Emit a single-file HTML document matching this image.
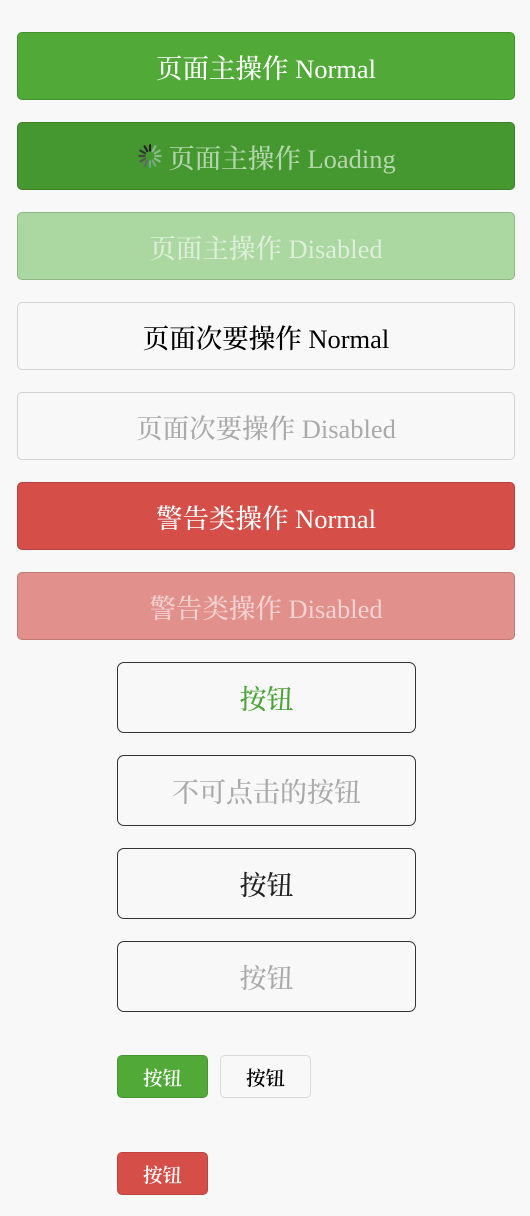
<!DOCTYPE html>
<html><head><meta charset="utf-8"><style>
body{margin:0;background:#f8f8f8;width:530px;height:1216px;position:relative;font-family:"Liberation Serif","Noto Serif CJK SC",serif;}
.b{position:absolute;left:17px;width:498px;height:68px;box-sizing:border-box;border-radius:5px;border:1px solid rgba(0,0,0,.15);display:flex;align-items:center;justify-content:center;font-size:26.5px;color:#fff;font-weight:500;}
.o{position:absolute;left:117px;width:299px;height:71px;box-sizing:border-box;border:1.5px solid #333;border-radius:7px;display:flex;align-items:center;justify-content:center;font-size:27px;font-weight:500;}
.m{position:absolute;width:91px;height:43px;box-sizing:border-box;border-radius:5px;border:1px solid rgba(0,0,0,.12);display:flex;align-items:center;justify-content:center;font-size:19.5px;color:#fff;font-weight:600;}
</style></head><body>
<div class="b" style="top:32px;background:#51aa38">页面主操作 Normal</div>
<div class="b" style="top:122px;background:#459830;color:rgba(255,255,255,.6)"><svg width="28" height="28" viewBox="0 0 26 26" style="margin-right:4px"><g stroke-width="2" stroke-linecap="round"><line x1="13" y1="3" x2="13" y2="8" stroke="#222"/><line x1="8" y1="4" x2="10.5" y2="8.5" stroke="#222"/><line x1="4" y1="8" x2="8.5" y2="10.5" stroke="#333"/><line x1="3" y1="13" x2="8" y2="13" stroke="#444"/><line x1="4" y1="18" x2="8.5" y2="15.5" stroke="#555"/><line x1="8" y1="22" x2="10.5" y2="17.5" stroke="#666"/><line x1="13" y1="23" x2="13" y2="18" stroke="#6a8"/><line x1="18" y1="22" x2="15.5" y2="17.5" stroke="#7a7"/><line x1="22" y1="18" x2="17.5" y2="15.5" stroke="#8b8"/><line x1="23" y1="13" x2="18" y2="13" stroke="#8b8"/><line x1="22" y1="8" x2="17.5" y2="10.5" stroke="#8b8"/><line x1="18" y1="4" x2="15.5" y2="8.5" stroke="#8b8"/></g></svg>页面主操作 Loading</div>
<div class="b" style="top:212px;background:#abd7a0;color:rgba(255,255,255,.6)">页面主操作 Disabled</div>
<div class="b" style="top:302px;background:#f8f8f8;color:#000">页面次要操作 Normal</div>
<div class="b" style="top:392px;background:#f8f8f8;color:#aaa">页面次要操作 Disabled</div>
<div class="b" style="top:482px;background:#d54f48">警告类操作 Normal</div>
<div class="b" style="top:572px;background:#e2908c;color:rgba(255,255,255,.6)">警告类操作 Disabled</div>
<div class="o" style="top:662px;color:#4aa436">按钮</div>
<div class="o" style="top:755px;color:#aaa">不可点击的按钮</div>
<div class="o" style="top:848px;color:#222">按钮</div>
<div class="o" style="top:941px;color:#aaa">按钮</div>
<div class="m" style="left:117px;top:1055px;background:#51aa38">按钮</div>
<div class="m" style="left:220px;top:1055px;background:#f8f8f8;color:#000">按钮</div>
<div class="m" style="left:117px;top:1152px;background:#d54f48">按钮</div>
</body></html>
